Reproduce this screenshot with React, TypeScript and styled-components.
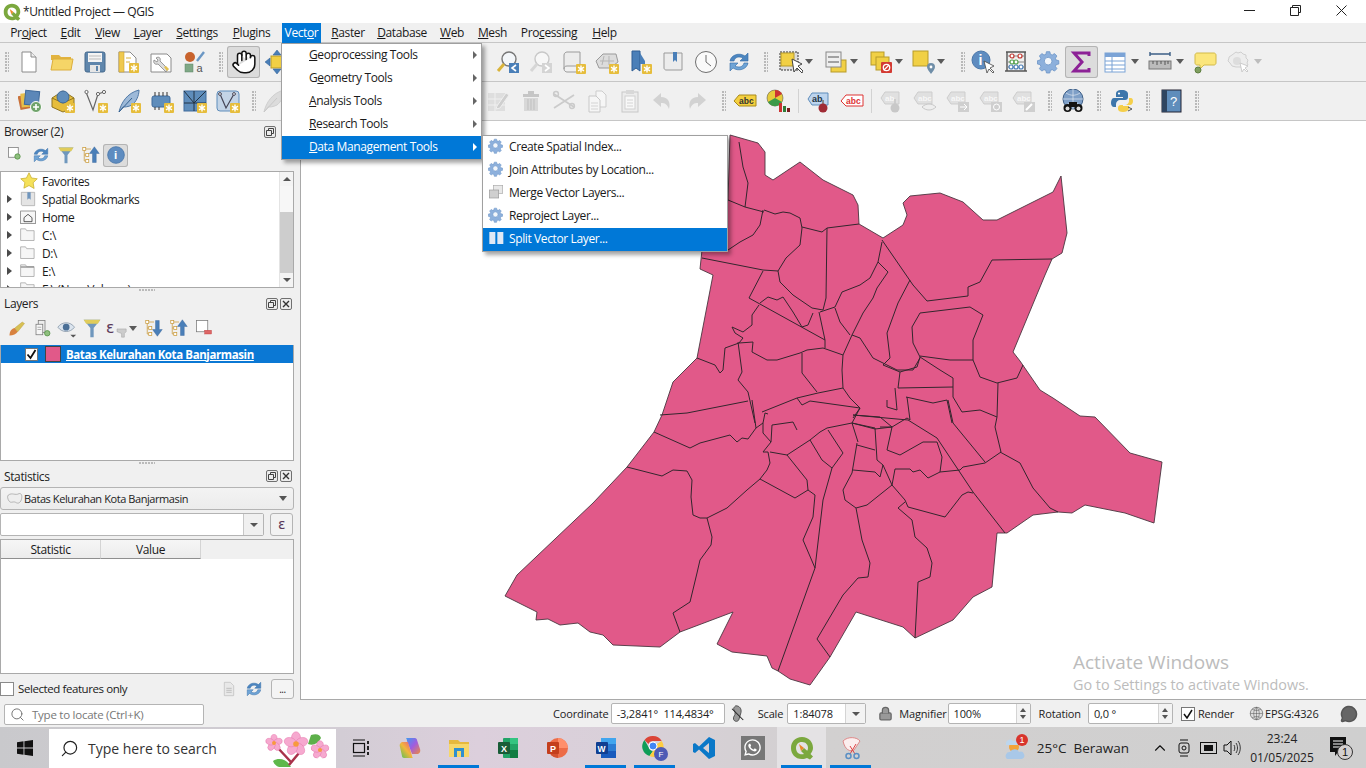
import React from 'react';
import styled, { createGlobalStyle } from 'styled-components';
import { Hand, Search, ChevronUp, Lock, MessageCircle } from 'lucide-react';
import { FaWhatsapp } from 'react-icons/fa';

const UI = '"Open Sans", "Noto Sans", "Liberation Sans", sans-serif';

const Global = createGlobalStyle`
  html, body { margin: 0; padding: 0; width: 1366px; height: 768px; overflow: hidden; }
  body { font-family: ${UI}; font-size: 12px; letter-spacing: -0.38px; color: #1a1a1a; background: #f0f0f0; }
  #root { width: 1366px; height: 768px; }
  * { box-sizing: border-box; }
`;

const Page = styled.div`
  position: relative;
  width: 1366px;
  height: 768px;
  display: flex;
  flex-direction: column;
  overflow: hidden;
`;

/* ---------- title bar ---------- */
const TitleBar = styled.div`
  height: 23px;
  background: #fff;
  display: flex;
  align-items: center;
  padding-left: 3px;
`;
const TitleText = styled.span`
  margin-left: 2px;
  font-size: 12px;
  color: #222;
`;
const WinButtons = styled.div`
  margin-left: auto;
  display: flex;
  height: 100%;
  margin-right: 2px;
`;
const WinButton = styled.div`
  width: 46px;
  display: flex;
  align-items: center;
  justify-content: center;
  margin-top: -2px;
`;

/* ---------- menu bar ---------- */
const MenuBar = styled.div`
  height: 20px;
  background: #f0f0f0;
  border-bottom: 1px solid #c6c6c6;
  display: flex;
  padding-left: 3px;
  font-size: 12px;
`;
const MenuItem = styled.div<{ $active?: boolean; $w: number }>`
  width: ${p => p.$w}px;
  margin-left: ${p => (p.$active ? '5px' : '0')};
  text-align: center;
  line-height: 19px;
  height: ${p => (p.$active ? '20px' : '19px')};
  background: ${p => (p.$active ? '#0078d7' : 'transparent')};
  color: ${p => (p.$active ? '#fff' : '#1a1a1a')};
  white-space: nowrap;
`;

/* ---------- toolbars ---------- */
const ToolBar = styled.div`
  height: 39px;
  background: #f0f0f0;
  border-bottom: 1px solid #c6c6c6;
  display: flex;
  align-items: center;
  padding-bottom: 1px;
`;
const Handle = styled.div<{ $w: number; $x?: number }>`
  width: ${p => p.$w}px;
  height: 22px;
  flex: none;
  position: relative;
  &::after {
    content: '';
    display: block;
    width: 4px;
    height: 20px;
    margin: 1px 0 0 ${p => p.$x ?? 5}px;
    background-image: radial-gradient(circle at 1px 1px, #b9b9b9 0.8px, transparent 1px);
    background-size: 3px 3px;
  }
`;
const ToolBtn = styled.div<{ $active?: boolean; $w?: number }>`
  width: ${p => p.$w ?? 33}px;
  height: 32px;
  flex: none;
  display: flex;
  align-items: center;
  justify-content: center;
  border-radius: 3px;
  background: ${p => (p.$active ? '#dcdcdc' : 'transparent')};
  box-shadow: ${p => (p.$active ? 'inset 0 0 0 1px #b4b4b4' : 'none')};
`;
const ToolGap = styled.div<{ $w: number }>`
  width: ${p => p.$w}px;
  flex: none;
`;
const ToolSep = styled.div<{ $w: number }>`
  width: ${p => p.$w}px;
  height: 24px;
  flex: none;
  display: flex;
  justify-content: center;
  &::after {
    content: '';
    width: 1px;
    background: #d2d2d2;
  }
`;
const DropArea = styled.div<{ $w: number; $dim?: boolean }>`
  width: ${p => p.$w}px;
  flex: none;
  &::after {
    content: '';
    display: block;
    width: 0;
    height: 0;
    border-left: 4.5px solid transparent;
    border-right: 4.5px solid transparent;
    border-top: 5px solid ${p => (p.$dim ? '#bdbdbd' : '#5a5a5a')};
  }
`;

/* ---------- main area ---------- */
const Main = styled.div`
  height: 579px;
  display: flex;
`;
const LeftDock = styled.div`
  width: 300px;
  flex: none;
  display: flex;
  flex-direction: column;
  padding-right: 6px;
`;
const DockHeader = styled.div<{ $h: number; $up?: boolean }>`
  height: ${p => p.$h}px;
  flex: none;
  display: flex;
  align-items: center;
  padding: 0 2px ${p => (p.$up ? '2px' : '0')} 4px;
`;
const DockTitle = styled.span`
  font-size: 12px;
  color: #222;
`;
const DockActions = styled.div`
  margin-left: auto;
  display: flex;
  gap: 2px;
`;
const DockBtn = styled.div`
  width: 12px;
  height: 12px;
  border: 1px solid #707070;
  border-radius: 2px;
  background: #ececec;
  display: flex;
  align-items: center;
  justify-content: center;
`;
const SmallBar = styled.div<{ $h: number }>`
  height: ${p => p.$h}px;
  flex: none;
  display: flex;
  align-items: center;
  padding-bottom: 3px;
`;
const SmallBtn = styled.div<{ $w?: number; $active?: boolean }>`
  width: ${p => p.$w ?? 25}px;
  height: 23px;
  flex: none;
  display: flex;
  align-items: center;
  justify-content: center;
  border-radius: 3px;
  background: ${p => (p.$active ? '#dcdcdc' : 'transparent')};
  box-shadow: ${p => (p.$active ? 'inset 0 0 0 1px #b4b4b4' : 'none')};
`;
const Tree = styled.div`
  height: 117px;
  flex: none;
  background: #fff;
  border: 1px solid #a9a9a9;
  border-right-color: #a9a9a9;
  display: flex;
  overflow: hidden;
`;
const TreeRows = styled.div`
  flex: 1;
  overflow: hidden;
`;
const TreeRow = styled.div`
  height: 18px;
  flex: none;
  display: flex;
  align-items: center;
  font-size: 12px;
  color: #1a1a1a;
`;
const TreeArrow = styled.div<{ $show: boolean }>`
  width: 19px;
  padding-left: 6px;
  flex: none;
  &::after {
    content: '';
    display: ${p => (p.$show ? 'block' : 'none')};
    width: 0;
    height: 0;
    border-top: 4px solid transparent;
    border-bottom: 4px solid transparent;
    border-left: 5px solid #4a4a4a;
  }
`;
const TreeIcon = styled.div`
  width: 22px;
  flex: none;
  display: flex;
  justify-content: flex-start;
`;
const ScrollBar = styled.div`
  width: 14px;
  flex: none;
  background: #f0f0f0;
  display: flex;
  flex-direction: column;
  border-left: 1px solid #e4e4e4;
`;
const ScrollEnd = styled.div<{ $down?: boolean }>`
  height: 14px;
  flex: none;
  background: #f4f4f4;
  display: flex;
  align-items: center;
  justify-content: center;
  &::after {
    content: '';
    width: 0;
    height: 0;
    border-left: 4px solid transparent;
    border-right: 4px solid transparent;
    ${p => (p.$down ? 'border-top: 4px solid #555;' : 'border-bottom: 4px solid #555;')}
  }
`;
const ScrollTrack = styled.div`
  height: 26px;
  flex: none;
  background: #f7f7f7;
`;
const ScrollThumb = styled.div`
  flex: 1;
  background: #cdcdcd;
`;
const Splitter = styled.div<{ $h: number }>`
  height: ${p => p.$h}px;
  flex: none;
  display: flex;
  justify-content: center;
  &::after {
    content: '';
    width: 16px;
    height: 2px;
    margin-top: 1px;
    background-image: radial-gradient(circle at 1px 1px, #b9b9b9 0.7px, transparent 1px);
    background-size: 3px 2px;
  }
`;
const LayerList = styled.div`
  height: 116px;
  flex: none;
  background: #fff;
  border: 1px solid #a9a9a9;
  border-top: none;
`;
const LayerRow = styled.div`
  height: 18px;
  background: #0b78d4;
  display: flex;
  align-items: center;
  padding-left: 24px;
`;
const LayerCheck = styled.div`
  width: 13px;
  height: 13px;
  background: #fff;
  border: 1px solid #777;
  display: flex;
  align-items: center;
  justify-content: center;
`;
const LayerSwatch = styled.div`
  width: 16px;
  height: 16px;
  margin-left: 7px;
  background: #e15989;
  border: 1px solid #444;
`;
const LayerName = styled.span`
  margin-left: 5px;
  font-size: 11.5px;
  font-weight: 700;
  color: #fff;
  text-decoration: underline;
  letter-spacing: -0.4px;
`;
const Combo = styled.div`
  height: 23px;
  flex: none;
  background: linear-gradient(#f3f3f3, #ececec);
  border: 1px solid #b4b4b4;
  border-radius: 3px;
  display: flex;
  align-items: center;
  padding-left: 6px;
  font-size: 11px;
  letter-spacing: -0.42px;
  color: #222;
`;
const ComboText = styled.span`
  margin-left: 1px;
`;
const ComboArrow = styled.div`
  margin-left: auto;
  margin-right: 6px;
  width: 0;
  height: 0;
  border-left: 4.5px solid transparent;
  border-right: 4.5px solid transparent;
  border-top: 5px solid #555;
`;
const ExprRow = styled.div`
  display: flex;
  height: 23px;
  margin-top: 3px;
  flex: none;
`;
const ExprInput = styled.div`
  width: 264px;
  background: #fff;
  border: 1px solid #b4b4b4;
  border-radius: 2px;
  display: flex;
  justify-content: flex-end;
  align-items: stretch;
`;
const ExprDrop = styled.div`
  width: 20px;
  background: #f0f0f0;
  border-left: 1px solid #c8c8c8;
  display: flex;
  align-items: center;
  justify-content: center;
  &::after {
    content: '';
    width: 0;
    height: 0;
    border-left: 4px solid transparent;
    border-right: 4px solid transparent;
    border-top: 4px solid #555;
  }
`;
const ExprBtn = styled.div`
  width: 23px;
  margin-left: 6px;
  border: 1px solid #b4b4b4;
  border-radius: 3px;
  background: #f2f2f2;
  text-align: center;
  font-family: "DejaVu Sans", sans-serif;
  font-size: 14px;
  line-height: 20px;
  color: #5a3a5a;
`;
const StatTable = styled.div`
  height: 135px;
  margin-top: 3px;
  flex: none;
  background: #fff;
  border: 1px solid #a9a9a9;
`;
const StatHeader = styled.div`
  height: 19px;
  background: #f0f0f0;
  display: flex;
`;
const StatCol = styled.div`
  width: 100px;
  text-align: center;
  line-height: 19px;
  font-size: 12px;
  background: linear-gradient(#f6f6f6, #ececec);
  border-right: 1px solid #d4d4d4;
  border-bottom: 1px solid #8f8f8f;
`;
const StatFoot = styled.div`
  flex: 1;
  display: flex;
  align-items: center;
  padding-top: 3px;
`;
const FootCheck = styled.div`
  width: 14px;
  height: 14px;
  background: #fff;
  border: 1px solid #8a8a8a;
  margin-right: 4px;
`;
const FootLabel = styled.span`
  font-size: 11.5px;
  letter-spacing: -0.42px;
`;
const FootTools = styled.div`
  margin-left: auto;
  display: flex;
  align-items: center;
`;
const MoreBtn = styled.div`
  width: 23px;
  height: 20px;
  margin-left: 5px;
  border: 1px solid #b4b4b4;
  border-radius: 3px;
  background: #f4f4f4;
  font-size: 10px;
  line-height: 19px;
  text-align: center;
`;

/* ---------- map ---------- */
const Canvas = styled.div`
  position: relative;
  flex: 1;
  background: #fff;
  border-left: 1px solid #a9a9a9;
  border-bottom: 1px solid #a9a9a9;
  overflow: hidden;
`;
const MapSvg = styled.svg`
  display: block;
  width: 1065px;
  height: 579px;
`;
const Watermark = styled.div`
  position: absolute;
  left: 772px;
  top: 529px;
  color: #bcbcbc;
  letter-spacing: 0;
  font-family: "Open Sans", sans-serif;
`;
const WatermarkBig = styled.div`
  font-size: 19px;
  line-height: 24px;
`;
const WatermarkSmall = styled.div`
  font-size: 14.4px;
  line-height: 22px;
  white-space: nowrap;
`;

/* ---------- menus over the page ---------- */
const Popup = styled.div<{ $l: number; $t: number; $w: number }>`
  position: absolute;
  left: ${p => p.$l}px;
  top: ${p => p.$t}px;
  width: ${p => p.$w}px;
  background: #fff;
  border: 1px solid #a0a0a0;
  box-shadow: 3px 3px 4px rgba(0, 0, 0, 0.35);
  z-index: 5;
`;
const PopupItem = styled.div<{ $active?: boolean; $indent: number }>`
  position: relative;
  height: 23px;
  display: flex;
  align-items: center;
  padding: 0 0 2px ${p => p.$indent}px;
  font-size: 12px;
  white-space: nowrap;
  background: ${p => (p.$active ? '#0078d7' : 'transparent')};
  color: ${p => (p.$active ? '#fff' : '#1a1a1a')};
`;
const PopupArrow = styled.div<{ $active?: boolean }>`
  position: absolute;
  right: 4px;
  top: 7px;
  width: 0;
  height: 0;
  border-top: 4px solid transparent;
  border-bottom: 4px solid transparent;
  border-left: 4px solid ${p => (p.$active ? '#fff' : '#666')};
`;
const PopupIcon = styled.div`
  width: 17px;
  height: 17px;
  margin-right: 4px;
  flex: none;
  display: flex;
`;

/* ---------- status bar ---------- */
const StatusBar = styled.div`
  height: 27px;
  background: #f0f0f0;
  display: flex;
  align-items: center;
  font-size: 11px;
  letter-spacing: -0.15px;
  color: #222;
`;
const Locator = styled.div`
  width: 200px;
  height: 21px;
  margin-left: 4px;
  margin-top: 2px;
  background: #fff;
  border: 1px solid #b4b4b4;
  border-radius: 2px;
  display: flex;
  align-items: center;
  padding-left: 5px;
  color: #777;
  gap: 7px;
  font-size: 11.5px;
  letter-spacing: -0.25px;
`;
const StatusLabel = styled.span<{ $l: number }>`
  margin-left: ${p => p.$l}px;
  white-space: nowrap;
`;
const StatusField = styled.div<{ $w: number; $l: number }>`
  width: ${p => p.$w}px;
  height: 21px;
  margin-left: ${p => p.$l}px;
  background: #fff;
  border: 1px solid #b4b4b4;
  border-radius: 2px;
  display: flex;
  align-items: center;
  padding-left: 5px;
  white-space: pre;
  flex: none;
`;
const FieldDrop = styled.div`
  margin-left: auto;
  width: 20px;
  height: 100%;
  border-left: 1px solid #d4d4d4;
  background: #f3f3f3;
  display: flex;
  align-items: center;
  justify-content: center;
  &::after {
    content: '';
    width: 0;
    height: 0;
    border-left: 4px solid transparent;
    border-right: 4px solid transparent;
    border-top: 4px solid #555;
  }
`;
const FieldSpin = styled.div`
  margin-left: auto;
  width: 14px;
  height: 100%;
  border-left: 1px solid #d4d4d4;
  background: #f3f3f3;
  display: flex;
  flex-direction: column;
  align-items: center;
  justify-content: center;
  gap: 3px;
  &::before, &::after {
    content: '';
    width: 0;
    height: 0;
    border-left: 3.5px solid transparent;
    border-right: 3.5px solid transparent;
  }
  &::before { border-bottom: 4px solid #555; }
  &::after { border-top: 4px solid #555; }
`;
const StatusIcon = styled.div<{ $l: number }>`
  margin-left: ${p => p.$l}px;
  display: flex;
  flex: none;
`;
const RenderCheck = styled.div`
  width: 14px;
  height: 14px;
  margin-left: 8px;
  margin-right: 3px;
  background: #fff;
  border: 1px solid #777;
  display: flex;
  align-items: center;
  justify-content: center;
  flex: none;
`;

/* ---------- taskbar ---------- */
const TaskBar = styled.div`
  height: 41px;
  letter-spacing: 0;
  background: linear-gradient(90deg, #c9c9cc 0%, #d3cdd5 25%, #dccfdc 35%, #d9d0d9 45%, #d2d0d0 60%, #cfcfcf 100%);
  display: flex;
  align-items: stretch;
`;
const StartBtn = styled.div`
  width: 49px;
  display: flex;
  align-items: center;
  justify-content: center;
  flex: none;
`;
const SearchBox = styled.div`
  width: 287px;
  margin-top: 2px;
  background: #fff;
  display: flex;
  align-items: center;
  padding-left: 11px;
  position: relative;
  flex: none;
`;
const SearchText = styled.span`
  margin-left: 9px;
  font-size: 14px;
  color: #333;
`;
const SearchArt = styled.div`
  position: absolute;
  right: 3px;
  top: 0;
`;
const TaskItem = styled.div<{ $open?: boolean; $current?: boolean }>`
  width: 49px;
  flex: none;
  position: relative;
  display: flex;
  align-items: center;
  justify-content: center;
  background: ${p => (p.$current ? '#e4e2e4' : 'transparent')};
  &::after {
    content: '';
    display: ${p => (p.$open ? 'block' : 'none')};
    position: absolute;
    left: 4px;
    right: 4px;
    bottom: 0;
    height: 3px;
    background: #0078d7;
  }
`;
const WhatsTile = styled.div`
  width: 24px;
  height: 24px;
  background: #777;
  display: flex;
  align-items: center;
  justify-content: center;
`;
const Tray = styled.div`
  margin-left: auto;
  display: flex;
  align-items: center;
  color: #222;
`;
const Weather = styled.div`
  display: flex;
  align-items: center;
  margin-right: 19px;
  font-size: 13.5px;
  gap: 5px;
  white-space: pre;
`;
const TrayIcon = styled.div`
  width: 24px;
  display: flex;
  justify-content: center;
  flex: none;
`;
const Clock = styled.div`
  width: 68px;
  margin-left: 4px;
  font-size: 12px;
  line-height: 19px;
  text-align: center;
`;
const Notify = styled.div`
  width: 50px;
  display: flex;
  justify-content: center;
  flex: none;
`;

/* ---------- icons ---------- */
type IP = { children: React.ReactNode; s?: number };
const I = ({ children, s = 24 }: IP) => (
  <svg width={s} height={s} viewBox="0 0 24 24" style={{ display: 'block' }}>{children}</svg>
);
const Star = ({ x = 14, y = 14 }: { x?: number; y?: number }) => (
  <g transform={`translate(${x} ${y})`}>
    <rect width="10" height="10" rx="1" fill="#e6bd3c" />
    <path d="M5 1.5v7M2 3.2l6 3.6M8 3.2l-6 3.6" stroke="#fff" strokeWidth="1.4" />
  </g>
);
const GlyphText = ({ x, y, t, c, s = 7, w = 700 }: { x: number; y: number; t: string; c: string; s?: number; w?: number }) => (
  <text x={x} y={y} fontSize={s} fontWeight={w} fill={c} letterSpacing="0" fontFamily="Liberation Sans, sans-serif">{t}</text>
);
const Refresh = ({ s = 24 }: { s?: number }) => (
  <I s={s}>
    <path d="M3 11C4 5 12 2 18 6l3-3v8h-8l3-3C12 6 8 7 7 11z" fill="#4d86c0" stroke="#2f6aa5" strokeWidth=".6" />
    <path d="M21 13c-1 6-9 9-15 5l-3 3v-8h8l-3 3c4 2 8 1 9-3z" fill="#6fa4d6" stroke="#2f6aa5" strokeWidth=".6" />
  </I>
);
const GearPath = "M10 1h4l.6 3 2.2.9 2.6-1.7 2.8 2.8-1.7 2.6.9 2.2 3 .6v4l-3 .6-.9 2.2 1.7 2.6-2.8 2.8-2.6-1.7-2.2.9-.6 3h-4l-.6-3-2.2-.9-2.6 1.7-2.8-2.8 1.7-2.6-.9-2.2-3-.6v-4l3-.6.9-2.2-1.7-2.6 2.8-2.8 2.6 1.7 2.2-.9z";
const Gear = ({ s = 24 }: { s?: number }) => (
  <svg width={s} height={s} viewBox="-1 -1 28 28" style={{ display: 'block' }}>
    <path d={GearPath} fill="#8db0dc" stroke="#6f97c8" strokeWidth="1" />
    <circle cx="12" cy="12" r="4.5" fill="#f2f6fb" stroke="#6f97c8" />
  </svg>
);

const NewFile = () => <I><path d="M5 2h9l5 5v15H5z" fill="#fff" stroke="#8a8a8a" /><path d="M14 2v5h5" fill="#eee" stroke="#8a8a8a" /></I>;
const OpenFolder = () => <I><path d="M1 5h8l2 2h10v3H1z" fill="#e2b33f" /><path d="M1 20l2-11h20l-2 11z" fill="#f5d567" stroke="#dcae3c" /></I>;
const Save = () => <I><rect x="2" y="2" width="20" height="20" rx="2" fill="#5f86ac" stroke="#44688c" /><rect x="5" y="3" width="14" height="9" fill="#f4f4f4" /><path d="M6 6h12M6 9h12" stroke="#bbb" /><rect x="7" y="15" width="10" height="7" fill="#e6e6e6" /><rect x="13" y="16" width="2" height="5" fill="#5f86ac" /></I>;
const SaveAs = () => <I><path d="M3 2h11l6 6v14H3z" fill="#fff" stroke="#8a8a8a" /><rect x="3" y="2" width="5" height="20" fill="#efc94f" stroke="#caa033" strokeWidth=".6" /><path d="M10 8h5M10 12h4" stroke="#d6b040" /><Star x={13} y={13} /></I>;
const Props = () => <I><path d="M2 4h16l4 4v14H2z" fill="#fff" stroke="#8a8a8a" /><path d="M7 8c3-2 5 0 4 3l8 8-2 3-8-8c-3 1-5-1-4-4l3 2 1-2z" fill="#ddd" stroke="#777" strokeWidth=".7" /><path d="M15 17l3 4 2-2-3-3z" fill="#e3c14f" /></I>;
const StyleIco = () => <I><circle cx="8" cy="7" r="5" fill="#c8632d" /><rect x="3" y="14" width="8" height="8" fill="#7fa886" stroke="#5e8566" strokeWidth=".5" /><path d="M15 11l7-9" stroke="#6b97c4" strokeWidth="2.4" /><GlyphText x={14.5} y={22} t="a" c="#555" s={11} w={400} /></I>;
const HandIco = () => <Hand size={26} strokeWidth={1.4} color="#111" fill="#fff" />;
const PanTo = () => <I><rect x="6" y="6" width="12" height="12" fill="#f1d045" stroke="#b79b2a" /><path d="M12 0l4 5H8zM12 24l-4-5h8zM0 12l5-4v8zM24 12l-5 4V8z" fill="#4a7fb8" stroke="#2f5f95" strokeWidth=".5" /></I>;
const ZoomLast = () => <I><circle cx="13" cy="9" r="7" fill="#f3f6f9" stroke="#777" strokeWidth="1.4" /><path d="M8 14l-6 7" stroke="#d9b43c" strokeWidth="3" /><rect x="13" y="13" width="10" height="10" fill="#4a7fb8" /><path d="M20 15l-4 3 4 3" fill="none" stroke="#fff" strokeWidth="1.6" /></I>;
const ZoomNext = () => <I><circle cx="13" cy="9" r="7" fill="#f7f7f7" stroke="#c8c8c8" strokeWidth="1.4" /><path d="M8 14l-6 7" stroke="#d6d6d6" strokeWidth="3" /><rect x="13" y="13" width="10" height="10" fill="#d4d4d4" /><path d="M16 15l4 3-4 3" fill="none" stroke="#fff" strokeWidth="1.6" /></I>;
const NewMapView = () => <I><path d="M2 5c0-2 2-3 3-3h13v14H5c-2 0-3 1-3 3z" fill="#ececec" stroke="#9a9a9a" /><path d="M2 19c0 2 2 3 3 3h13" fill="none" stroke="#9a9a9a" /><Star /></I>;
const Map3d = () => <I><path d="M1 11l7-7h13l2 8-8 6H4z" fill="#dcdcdc" stroke="#9a9a9a" /><path d="M5 11h14M9 6l-2 9M14 6v9" stroke="#b5b5b5" /><Star /></I>;
const BookNew = () => <I><path d="M4 1h8v20l-4-3-4 3z" fill="#4a7fb8" stroke="#2f5f95" /><path d="M12 3l5 8v3h-5z" fill="#4a7fb8" /><Star /></I>;
const BookShow = () => <I><path d="M3 3h18v17H5c-1 0-2-1-2-2z" fill="#ececec" stroke="#9a9a9a" /><path d="M12 2h4v10l-2-2-2 2z" fill="#4a7fb8" /></I>;
const ClockIco = () => <I><circle cx="12" cy="12" r="10.5" fill="#fafafa" stroke="#6f6f6f" /><path d="M12 5v7l5 4" fill="none" stroke="#6f6f6f" /></I>;
const SelectIco = () => <I><rect x="1" y="2" width="18" height="18" fill="#ddd" stroke="#333" strokeDasharray="2 1" /><rect x="2" y="3" width="13" height="13" fill="#f1d045" stroke="#b79b2a" /><path d="M13 9l2 13 3-4 5 5 1-2-5-5 4-2z" fill="#fff" stroke="#444" /></I>;
const SelectForm = () => <I><rect x="7" y="10" width="15" height="12" fill="#f1d045" stroke="#b79b2a" /><rect x="2" y="2" width="15" height="15" fill="#eee" stroke="#888" /><path d="M4 7h11M4 12h11" stroke="#888" strokeWidth="1.6" /></I>;
const Deselect = () => <I><rect x="2" y="2" width="13" height="13" fill="#f1d045" stroke="#b79b2a" /><rect x="7" y="7" width="13" height="13" fill="#f1d045" stroke="#b79b2a" /><rect x="12" y="12" width="11" height="11" rx="1" fill="#d33a32" /><circle cx="17.5" cy="17.5" r="3.2" fill="none" stroke="#fff" strokeWidth="1.3" /><path d="M15 20l5-5" stroke="#fff" strokeWidth="1.3" /></I>;
const SelectLoc = () => <I><rect x="1" y="1" width="15" height="15" fill="#f1d045" stroke="#b79b2a" /><path d="M19 24c-2-3-4-5-4-7a4 4 0 118 0c0 2-2 4-4 7z" fill="#6f8ea8" /><circle cx="19" cy="17" r="1.4" fill="#fff" /></I>;
const Identify = () => <I><circle cx="10" cy="10" r="9" fill="#5e8cc0" stroke="#4a77aa" /><GlyphText x={7.5} y={15} t="i" c="#fff" s={14} /><path d="M13 11l3 12 2-4 4 4 1-1-4-4 4-2z" fill="#fff" stroke="#444" strokeWidth=".8" /></I>;
const Abacus = () => <I><path d="M2 2h20M3 2v19M21 2v19M1 21h22" stroke="#555" strokeWidth="1.4" fill="none" /><path d="M3 6h18M3 12h18M3 17h18" stroke="#888" /><g fill="#fff" strokeWidth="1.2"><circle cx="8" cy="6" r="2" stroke="#c23b33" /><circle cx="16" cy="6" r="2" stroke="#c23b33" /><circle cx="8" cy="12" r="2" stroke="#57a34f" /><circle cx="12" cy="12" r="2" stroke="#57a34f" /><circle cx="7" cy="17" r="2" stroke="#4a7fb8" /><circle cx="12" cy="17" r="2" stroke="#4a7fb8" /><circle cx="17" cy="17" r="2" stroke="#4a7fb8" /></g></I>;
const Sigma = () => <I><path d="M19 6V3H4l8 9-8 9h15v-3" fill="none" stroke="#8c2196" strokeWidth="3" /></I>;
const TableIco = () => <I><rect x="2" y="3" width="20" height="19" fill="#fff" stroke="#7ba3d6" /><rect x="2" y="3" width="20" height="4" fill="#7ba3d6" /><path d="M2 11h20M2 15h20M2 19h20M9 7v15" stroke="#7ba3d6" /></I>;
const Ruler = () => <I><path d="M2 4h20M2 2v4M22 2v4" stroke="#3b5e85" strokeWidth="1.4" /><rect x="1" y="11" width="22" height="8" fill="#bcbcbc" stroke="#777" /><path d="M5 11v3M9 11v4M13 11v3M17 11v4M20 11v3" stroke="#555" /></I>;
const Balloon = () => <I><path d="M4 3h17c1 0 2 1 2 2v8c0 1-1 2-2 2H11l-4 4v-4H4c-1 0-2-1-2-2V5c0-1 1-2 2-2z" fill="#fbe67c" stroke="#d2ba49" /><circle cx="5" cy="20" r="3" fill="#7f9f5f" stroke="#5f7f40" /></I>;
const DisabledRun = () => <I><path d="M10 2l2 1 3-1 2 2 3 1v3l2 2-1 3 1 2-2 2H10l-4-1-2-3-2-2 1-3V7l3-2z" fill="#ededed" stroke="#cfcfcf" /><circle cx="11" cy="11" r="4" fill="#ddd" /><path d="M14 13l2 9 2-3 3 3 1-1-3-3 3-2z" fill="#fff" stroke="#ccc" /></I>;
const DataSource = () => <I><rect x="1" y="6" width="13" height="14" fill="#c9713a" transform="rotate(-12 7 13)" /><rect x="3" y="4" width="13" height="14" fill="#e7bf4b" transform="rotate(-6 9 11)" /><rect x="7" y="2" width="14" height="14" fill="#5c87b8" stroke="#3f6a9b" transform="rotate(6 14 9)" /><circle cx="18" cy="18" r="5.5" fill="#6fa36a" stroke="#fff" /><path d="M18 15v6M15 18h6" stroke="#fff" strokeWidth="1.6" /></I>;
const GeoPkg = () => <I><path d="M1 9l11-7 11 7v9l-11 5-11-5z" fill="#e6bd3c" stroke="#8e7420" /><path d="M1 9l11 5 11-5" fill="none" stroke="#8e7420" /><circle cx="12" cy="8" r="6" fill="#5f8dbb" stroke="#3f6a9b" /><Star /></I>;
const NewShape = () => <I><path d="M2 3l7 18 5-16 6-2" fill="none" stroke="#666" strokeWidth="1.2" /><circle cx="2.5" cy="3" r="1.6" fill="#fff" stroke="#666" /><circle cx="14" cy="5" r="1.6" fill="#fff" stroke="#666" /><circle cx="20" cy="3" r="1.6" fill="#fff" stroke="#666" /><Star /></I>;
const Feather = ({ dim }: { dim?: boolean }) => <I><path d="M2 23C4 14 10 4 22 1c0 6-3 12-7 15-4 2-7 2-9 2z" fill={dim ? '#dcdcdc' : '#9db9d8'} stroke={dim ? '#cfcfcf' : '#4f78a6'} /><path d="M2 23L15 9" stroke={dim ? '#c8c8c8' : '#35618f'} />{!dim && <Star />}</I>;
const Scratch = () => <I><rect x="2" y="7" width="18" height="11" rx="2" fill="#5f8dbb" stroke="#3f6a9b" /><path d="M5 3v4M9 3v4M13 3v4M17 3v4M5 18v3M9 18v3" stroke="#333" /><Star /></I>;
const Virtual = () => <I><rect x="1" y="2" width="22" height="20" fill="#5f8dbb" stroke="#3f6a9b" /><path d="M1 14h22M11 2v20M1 2l10 12M11 14L23 2" stroke="#234" /><Star /></I>;
const MeshIco = () => <I><rect x="1" y="2" width="22" height="20" rx="3" fill="#c3d4e6" stroke="#5f8dbb" /><path d="M4 5l6 14 8-14" fill="none" stroke="#445" strokeWidth="1.2" /><circle cx="4" cy="5" r="1.4" fill="#fff" stroke="#445" /><circle cx="18" cy="5" r="1.4" fill="#fff" stroke="#445" /><Star /></I>;
const EditTable = () => <I><rect x="2" y="4" width="17" height="18" fill="#dedede" /><path d="M2 10h17M2 16h17M9 4v18" stroke="#f0f0f0" /><path d="M11 17l9-13 3 2-9 13-4 1z" fill="#cfcfcf" stroke="#efefef" /></I>;
const Trash = () => <I><rect x="4" y="5" width="16" height="3" fill="#c6c6c6" /><rect x="9" y="2" width="6" height="3" fill="#c6c6c6" /><path d="M5 9h14v13H5z" fill="#d8d8d8" /><path d="M9 10v11M12 10v11M15 10v11" stroke="#bfbfbf" /></I>;
const Scissors = () => <I><path d="M2 5l20 13M2 19L22 6" stroke="#cbcbcb" strokeWidth="1.8" /><circle cx="4" cy="5" r="2.4" fill="none" stroke="#cbcbcb" strokeWidth="1.5" /><circle cx="20" cy="17" r="2.4" fill="none" stroke="#cbcbcb" strokeWidth="1.5" /></I>;
const Copy = () => <I><path d="M11 2h6l4 4v12H11z" fill="#f6f6f6" stroke="#cdcdcd" /><path d="M4 7h7l4 4v12H4z" fill="#f6f6f6" stroke="#c8c8c8" /><path d="M6 14h7M6 17h7M6 20h7" stroke="#d4d4d4" /></I>;
const Paste = () => <I><rect x="4" y="3" width="16" height="20" fill="#ececec" stroke="#c8c8c8" /><rect x="8" y="1" width="8" height="4" fill="#d8d8d8" /><rect x="7" y="7" width="10" height="13" fill="#f8f8f8" stroke="#d0d0d0" /><path d="M9 11h6M9 14h6M9 17h6" stroke="#d4d4d4" /></I>;
const Undo = () => <I><path d="M10 4L2 11l8 7v-4c4 0 6 1 8 6 2-7-1-12-8-12z" fill="#d2d2d2" /></I>;
const Redo = () => <I><path d="M14 4l8 7-8 7v-4c-4 0-6 1-8 6-2-7 1-12 8-12z" fill="#d2d2d2" /></I>;
const LabelTag = ({ t, fill, line, c, x = 6 }: { t: string; fill: string; line: string; c: string; x?: number }) => (
  <I><path d="M1 12l5-6h17v11H6z" fill={fill} stroke={line} /><GlyphText x={x} y={15} t={t} c={c} s={8.5} /></I>
);
const DiagramIco = () => <I><circle cx="9" cy="9" r="8" fill="#e6cc3c" stroke="#444" strokeWidth=".5" /><path d="M9 9V1a8 8 0 017 4z" fill="#c33" /><path d="M9 9l-7 4a8 8 0 0014 0z" fill="#3c9a4a" /><rect x="13" y="14" width="3" height="9" fill="#c33" /><rect x="17" y="17" width="3" height="6" fill="#2f7d3a" /><rect x="21" y="19" width="3" height="4" fill="#7a1f1f" /></I>;
const LabelPin = () => <I><path d="M1 10l4-6h16v12H5z" fill="#bcd4ee" stroke="#5f8dbb" /><GlyphText x={5} y={13} t="ab" c="#234" s={9} /><path d="M16 11v7" stroke="#888" strokeWidth="2" /><circle cx="16" cy="19" r="4.5" fill="#a02b35" /></I>;
const GrayTag = ({ t, badge }: { t: string; badge: React.ReactNode }) => (
  <I><path d="M1 9l4-6h14v12H5z" fill="#e0e0e0" stroke="#cdcdcd" /><GlyphText x={5} y={12} t={t} c="#f7f7f7" s={8} />{badge}</I>
);
const MetaSearch = () => <I><circle cx="12" cy="10" r="10" fill="#7e9fc7" stroke="#3e5f87" /><path d="M2 10h20M12 0v20M5 4c5 3 9 3 14 0M5 16c5-3 9-3 14 0" stroke="#dfe8f2" strokeWidth=".7" fill="none" /><circle cx="6.5" cy="19" r="4" fill="#111" /><circle cx="17.5" cy="19" r="4" fill="#111" /><rect x="8" y="13" width="8" height="5" fill="#111" /><circle cx="6.5" cy="19.5" r="2" fill="#ddd" /><circle cx="17.5" cy="19.5" r="2" fill="#ddd" /></I>;
const Python = ({ s = 24 }: { s?: number }) => <I s={s}><path d="M12 1c-5 0-6 2-6 4v3h7v1H4c-2 0-3 2-3 5 0 2 1 4 3 4h2v-3c0-2 2-4 4-4h5c2 0 3-1 3-3V5c0-2-2-4-6-4z" fill="#3d76ab" /><circle cx="9" cy="4.5" r="1.1" fill="#fff" /><path d="M19 9v3c0 2-2 4-4 4h-4c-2 0-3 1-3 3v1c0 2 2 3 5 3s5-1 6-3v-3h-6v-1h7c2 0 3-2 3-4s-1-3-2-3z" fill="#f5cf4a" /><path d="M18 18l4 2-4 2" fill="none" stroke="#555" /></I>;
const HelpBook = () => <I><rect x="3" y="1" width="19" height="22" fill="#5f8dbb" stroke="#223" /><rect x="3" y="1" width="5" height="22" fill="#2f4560" /><GlyphText x={11} y={17} t="?" c="#fff" s={13} w={400} /></I>;

/* small panel icons */
const AddGroup = () => <I s={18}><rect x="2" y="2" width="13" height="13" fill="#fff" stroke="#777" /><circle cx="14" cy="14" r="3.6" fill="#8fbf7f" stroke="#4f8f3f" /></I>;
const Funnel = ({ s = 20 }: { s?: number }) => <I s={s}><path d="M2 2h20l-8 10v11h-4V12z" fill="#6f97bd" /><path d="M2 2h20l-3 5H5z" fill="#e0cc5a" /></I>;
const CollapseAll = ({ down }: { down?: boolean }) => <I s={18}><path d="M3 4h9M3 12h4M3 20h4M3 4v16" stroke="#c99a3a" fill="none" /><rect x="1" y="2" width="4" height="4" fill="#fff" stroke="#c99a3a" /><rect x="5" y="10" width="4" height="4" fill="#fff" stroke="#c99a3a" /><rect x="5" y="18" width="4" height="4" fill="#fff" stroke="#c99a3a" /><path d={down ? 'M14 2h5v12h4l-6.500 9L10 14h4z' : 'M14 22h5V10h4L16.500 1 10 10h4z'} fill="#4a7fb8" stroke="#2f5f95" strokeWidth=".5" /></I>;
const InfoSmall = () => <I s={20}><circle cx="12" cy="12" r="10" fill="#5e8cc0" stroke="#4a77aa" /><GlyphText x={9.5} y={17} t="i" c="#fff" s={14} /></I>;
const Folder = ({ open }: { open?: boolean }) => <I s={16}><path d="M1 3h8l2 3h12v16H1z" fill="#f6f6f6" stroke="#8e8e8e" transform="scale(.92)" />{open && <path d="M1 6h20" stroke="#8e8e8e" strokeWidth="2" />}</I>;
const HomeFolder = () => <I s={16}><rect x="1" y="3" width="22" height="19" fill="#f6f6f6" stroke="#6a6a6a" /><path d="M6 13l6-5 6 5v6H6z" fill="none" stroke="#444" strokeWidth="1.3" /></I>;
const BookTree = () => <I s={16}><path d="M2 2h20v20H4c-1 0-2-1-2-2z" fill="#e4e4e4" stroke="#a2a2a2" /><path d="M11 2h5v11l-2.5-2-2.5 2z" fill="#6f95bd" /></I>;
const StarIco = () => <I s={18}><path d="M12 1l3.4 7 7.6 1-5.5 5.4 1.3 7.6L12 18l-6.800 3.600 1.300-7.600L1 9l7.600-1z" fill="#f5e15a" stroke="#c7ad2f" /></I>;
const Brush = () => <I s={18}><path d="M2 22c0-6 3-9 7-10l4 5c-2 3-6 5-11 5z" fill="#d8823f" /><path d="M9 12l4 5 9-11-3-2z" fill="#d8c053" stroke="#ab9030" strokeWidth=".5" /></I>;
const AddLayers = () => <I s={18}><rect x="7" y="2" width="9" height="16" fill="#ececec" stroke="#777" /><rect x="4" y="7" width="9" height="14" fill="#f6f6f6" stroke="#777" /><path d="M6 11h5M6 14h5" stroke="#999" /><circle cx="19" cy="19" r="3.600" fill="#8fbf7f" stroke="#4f8f3f" /></I>;
const Eye = () => <I s={20}><path d="M1 11c5-7 15-7 20 0-5 7-15 7-20 0z" fill="#dbe4ee" stroke="#8a9aaa" /><circle cx="11" cy="11" r="4" fill="#4a6f96" /><path d="M16 20h7l-3.500 3.500z" fill="#555" /></I>;
const EpsFilter = () => <I s={22}><text x="0" y="17" fontSize="17" fill="#5a3a5a" letterSpacing="0" fontFamily="DejaVu Sans, sans-serif">ε</text><path d="M12 13h10v3l-2 2v4h-3v-4l-5-2z" fill="#ccc" stroke="#999" strokeWidth=".5" /></I>;
const RemoveLayer = () => <I s={18}><rect x="2" y="2" width="15" height="15" fill="#fff" stroke="#777" /><rect x="13" y="15" width="9" height="5" fill="#d66" stroke="#b33" strokeWidth=".5" /></I>;
const Combi = () => <I s={16}><path d="M2 6c6-4 10 1 16-2 3-1 5 2 4 7-1 6-5 9-9 6-4-2-7 2-10-2-2-3-3-7-1-9z" fill="#eee" stroke="#999" /></I>;
const GrayCopy = () => <I s={16}><path d="M5 2h9l5 5v15H5z" fill="#e8e8e8" stroke="#bbb" /><path d="M8 11h8M8 14h8M8 17h8" stroke="#aaa" /></I>;
const Cog16 = () => <Gear s={16} />;
const MergeIco = () => <I s={16}><rect x="8" y="2" width="14" height="12" fill="#e8e8e8" stroke="#aaa" /><rect x="2" y="9" width="14" height="12" fill="#cfcfcf" stroke="#999" /></I>;
const SplitIco = () => <I s={16}><rect x="2" y="3" width="9" height="18" fill="#dfe9f5" /><rect x="14" y="3" width="9" height="18" fill="#dfe9f5" /></I>;
const QLogo = ({ s = 18 }: { s?: number }) => (
  <svg width={s} height={s} viewBox="0 0 24 24" style={{ display: 'block' }}>
    <path d="M12 1C5 1 1 6 1 12s4 11 11 11c2 0 4-.5 5-1l3 1.500 3-3-2.500-2.500c1.500-2 2.500-4 2.500-6C23 6 19 1 12 1zm0 5c4 0 6 3 6 6 0 1-.3 2-.8 2.800L14 12l-3 3 3 3c-.6.200-1.300.300-2 .300-4 0-6-3-6-6.300S8 6 12 6z" fill="#7ba83e" />
    <path d="M9 8l5 4-3 3z" fill="#e88a2a" />
  </svg>
);
const EpsgGlobe = () => <I s={15}><circle cx="12" cy="12" r="10" fill="#ddd" stroke="#555" /><path d="M2 12h20M12 2v20M5 5c5 3 9 3 14 0M5 19c5-3 9-3 14 0M12 2c-6 5-6 15 0 20M12 2c6 5 6 15 0 20" stroke="#555" fill="none" strokeWidth=".8" /></I>;
const NoCrs = () => <I s={18}><path d="M9 1c5 0 8 4 7 9l-3 10c-2 3-6 2-7-1-1-4 3-5 2-9S4 5 9 1z" fill="#999" stroke="#333" /><path d="M4 5l15 15" stroke="#222" strokeWidth="1.4" /></I>;

const WinLogo = () => <svg width="16" height="16" viewBox="0 0 16 16"><path d="M0 2.300L6.500 1.300V7.600H0zM7.400 1.200L16 0V7.600H7.400zM0 8.400H6.500V14.700L0 13.700zM7.400 8.400H16V16L7.400 14.800z" fill="#111" /></svg>;
const Flowers = () => (
  <svg width="74" height="38" viewBox="0 0 74 38" style={{ display: 'block' }}>
    <path d="M52 6c6-2 9 0 10 3-3 6-8 8-13 6z" fill="#5db04a" />
    <path d="M14 32c6-4 14-2 18 6H20c-3-1-5-3-6-6z" fill="#5fb84a" />
    <path d="M18 18l14 15M40 24L30 36" stroke="#a8324a" strokeWidth="2.500" />
    {[[15, 14, 7], [37, 15, 10], [61, 21, 7.500]].map(([x, y, r], i) => (
      <g key={i} transform={`translate(${x} ${y})`}>
        {[0, 72, 144, 216, 288].map(a => (
          <ellipse key={a} cx="0" cy={-r * 0.6} rx={r * 0.45} ry={r * 0.62} fill="#f6a9cf" stroke="#e679ad" strokeWidth=".5" transform={`rotate(${a})`} />
        ))}
        <circle r={r * 0.28} fill="#f79a3e" />
      </g>
    ))}
  </svg>
);
const TaskView = () => <svg width="20" height="18" viewBox="0 0 20 18"><path d="M2 1h12M2 17h12" stroke="#111" strokeWidth="1.200" /><rect x="2.500" y="4.500" width="11" height="9" fill="none" stroke="#111" strokeWidth="1.200" /><path d="M17 2v3M17 7v4M17 13v3" stroke="#111" strokeWidth="1.800" /></svg>;
const Copilot = () => (
  <svg width="24" height="24" viewBox="0 0 24 24">
    <defs>
      <linearGradient id="cp" x1="0" y1="0" x2="1" y2="1"><stop offset="0" stopColor="#3e9bf0" /><stop offset=".5" stopColor="#a05ce0" /><stop offset="1" stopColor="#f08a3c" /></linearGradient>
      <linearGradient id="cp2" x1="0" y1="1" x2="1" y2="0"><stop offset="0" stopColor="#4ec25a" /><stop offset=".5" stopColor="#f2b63c" /><stop offset="1" stopColor="#e84f8a" /></linearGradient>
    </defs>
    <path d="M8 2h9c1 0 2 1 2 2l3 9c1 3-1 5-3 5h-5L9 5C9 3 8 2 8 2z" fill="url(#cp)" />
    <path d="M2 11c-1-3 1-5 3-5h5l4 14c0 1 1 2 1 2H6c-1 0-2-1-2-2z" fill="url(#cp2)" />
  </svg>
);
const Explorer = () => <I><path d="M2 4h9l2 2h9v4H2z" fill="#e6b93e" /><rect x="2" y="8" width="20" height="13" fill="#f6d76a" /><rect x="7" y="12" width="10" height="9" fill="#2f8fd0" /><rect x="10" y="15" width="4" height="6" fill="#f6d76a" /></I>;
const Excel = () => <I><rect x="7" y="2" width="15" height="20" rx="1" fill="#21a366" /><rect x="14" y="2" width="8" height="6" fill="#33c481" /><rect x="14" y="14" width="8" height="8" fill="#107c41" /><rect x="2" y="6" width="12" height="12" rx="1" fill="#185c37" /><GlyphText x={5} y={15.500} t="X" c="#fff" s={9} /></I>;
const Ppt = () => <I><circle cx="13" cy="12" r="10" fill="#ed6c47" /><path d="M13 2a10 10 0 0110 10H13z" fill="#ff8f6b" /><path d="M13 22a10 10 0 01-7-3V12h7z" fill="#d35230" /><rect x="2" y="6" width="12" height="12" rx="1" fill="#c43e1c" /><GlyphText x={5} y={15.500} t="P" c="#fff" s={9} /></I>;
const Word = () => <I><rect x="7" y="2" width="15" height="20" rx="1" fill="#2b7cd3" /><rect x="7" y="2" width="15" height="6" fill="#41a5ee" /><rect x="7" y="15" width="15" height="7" fill="#185abd" /><rect x="2" y="6" width="12" height="12" rx="1" fill="#103f91" /><GlyphText x={3.500} y={15.500} t="W" c="#fff" s={8.500} /></I>;
const Chrome = () => (
  <svg width="28" height="28" viewBox="0 0 28 28">
    <path d="M12 2a10 10 0 018.700 5H12a5 5 0 00-4.600 3L3.500 6A10 10 0 0112 2z" fill="#db4437" />
    <path d="M3.500 6l4 7a5 5 0 004.500 4l-3.500 5A10 10 0 013.500 6z" fill="#0f9d58" />
    <path d="M20.700 7a10 10 0 01-12.200 15l3.500-5a5 5 0 004-7z" fill="#ffcd40" />
    <circle cx="12" cy="12" r="4" fill="#4285f4" stroke="#fff" />
    <circle cx="20" cy="20" r="7" fill="#4f5bb5" />
    <text x="20" y="23" fontSize="8" textAnchor="middle" fill="#fff" fontFamily="Liberation Sans, sans-serif">F</text>
  </svg>
);
const VsCode = () => <I><path d="M17 1l6 3v16l-6 3-10-9.500L3 17l-2-1V8l2-1 4 3.500zM17 7l-6 5 6 5z" fill="#0a78c8" /></I>;
const Snip = () => <I><path d="M4 5c5-5 14-4 17 0l-6 9c-4 2-9 0-11-9z" fill="#fbeeee" stroke="#d88" /><path d="M11 10l5 8M17 8l-6 10" stroke="#d44" /><circle cx="9.500" cy="20" r="2.500" fill="none" stroke="#5a8fc4" strokeWidth="1.500" /><circle cx="17.500" cy="20" r="2.500" fill="none" stroke="#5a8fc4" strokeWidth="1.500" /></I>;
const WeatherIco = () => (
  <svg width="28" height="30" viewBox="0 0 28 30">
    <circle cx="10" cy="14" r="5" fill="#f2a33a" />
    <path d="M2 11a4 4 0 017-3h5v4H2z" fill="#bcd6ee" />
    <path d="M3 26a4 4 0 013-7 5 5 0 019 0 3.500 3.500 0 013 7z" fill="#a9c8e8" />
    <circle cx="18" cy="7" r="6" fill="#d8342c" />
    <text x="18" y="10" fontSize="9" textAnchor="middle" fill="#fff" fontFamily="Liberation Sans, sans-serif">1</text>
  </svg>
);
const Meet = () => <svg width="14" height="18" viewBox="0 0 14 18"><path d="M3 1h8M3 17h8" stroke="#111" /><rect x="2" y="4" width="10" height="10" rx="2" fill="none" stroke="#111" /><circle cx="7" cy="9" r="2" fill="none" stroke="#111" /></svg>;
const Battery = () => <svg width="17" height="12" viewBox="0 0 17 12"><rect x=".5" y=".5" width="16" height="11" fill="none" stroke="#111" /><rect x="4" y="3" width="9" height="6" fill="#111" /></svg>;
const Volume = () => <svg width="18" height="16" viewBox="0 0 18 16"><path d="M1 5h3l4-4v14l-4-4H1z" fill="none" stroke="#111" /><path d="M11 5c1 2 1 4 0 6M13 3c2 3 2 7 0 10M15 1c3 4 3 10 0 14" fill="none" stroke="#111" strokeWidth=".8" /></svg>;
const NotifyIco = () => (
  <svg width="28" height="28" viewBox="0 0 28 28">
    <path d="M3 3h16v15h-8l-3 4v-4H3z" fill="#111" />
    <path d="M6 7h10M6 10h10M6 13h10" stroke="#fff" />
    <circle cx="18" cy="18" r="7.500" fill="#d4d0d0" stroke="#333" />
    <text x="18" y="22" fontSize="11" textAnchor="middle" fill="#111" fontFamily="Liberation Sans, sans-serif">1</text>
  </svg>
);

/* ---------- map data, in page pixels ---------- */
const OUTLINE = '730,135 758,143 765,152 765,175 773,180 800,162 823,180 853,195 858,205 859,224 883,238 903,225 907,215 903,203 910,196 940,193 963,202 983,220 997,220 1053,192 1061,176 1067,233 1062,253 1052,259 1045,275 1013,352 1020,361 1040,390 1053,398 1080,416 1095,417 1130,453 1162,462 1154,523 1125,513 1085,505 1072,513 1058,512 1033,515 1007,533 997,533 992,587 973,597 953,620 915,638 903,627 856,612 830,657 810,685 790,679 778,671 772,668 767,656 732,652 717,644 733,612 680,632 660,647 613,645 603,635 590,632 578,623 560,625 548,619 536,620 537,612 505,596 517,575 593,503 627,467 654,432 662,415 673,382 697,358 713,275 700,269 702,250 705,220 728,200';
const LINES = [
  '702,258 763,270 778,271 786,258 800,245 802,228 800,218 790,213 783,212 775,214 764,210',
  '763,210 760,225 753,235 740,242 728,250',
  '728,200 745,207 764,212',
  '739,142 743,167 748,183 745,207',
  '802,227 822,232 827,228 859,224',
  '827,228 826,298 823,310 812,308 793,295 780,282 778,271',
  '763,271 749,298 825,340 819,312',
  '760,303 768,297 777,300 783,297 793,312 802,327 808,325 813,313',
  '759,305 752,315 752,325 743,332 732,327 735,333 743,338 739,343 725,348 723,370 720,373 715,365 697,358',
  '739,343 753,342 752,352 767,360 777,360 800,353 807,350 823,348 843,355',
  '738,342 742,372 738,380 748,392 755,423',
  '660,415 687,413 748,401',
  '762,412 797,398 818,393 843,388',
  '802,353 802,373 817,392',
  '825,340 825,348',
  '843,355 842,370 843,388 850,398 860,408',
  '843,355 852,335 860,338 873,358 897,370 913,370 920,358',
  '852,335 863,313 873,298 877,288 888,272 878,262 882,242',
  '820,312 835,307 842,292 860,285 870,278 878,262',
  '835,308 840,322 850,335',
  '882,240 913,285 927,301 968,296 968,287 980,282 992,260 1052,259',
  '910,280 898,303 887,333 890,358 883,365',
  '920,357 913,343 912,327 920,313 970,307 983,315 973,340 973,360 950,360 920,356',
  '973,360 980,377 997,383 1017,378 1023,365',
  '920,357 917,367 900,372 883,365',
  '900,372 898,388 953,387',
  '920,357 940,370 953,378 953,397 962,412 980,410 997,417 998,383',
  '997,417 995,427 1001,452 985,463 963,467',
  '1000,452 1020,463 1033,488 1050,508 1058,512',
  '853,415 908,420 937,438 973,492 1005,533',
  '948,400 953,423 985,462',
  '906,397 933,403 947,400 952,423',
  '880,427 892,427 907,418 910,420',
  '892,427 887,450 900,455 923,442 937,442 942,457 940,472 928,478 920,470 913,472 910,469 895,469 892,485',
  '940,472 960,470 963,467',
  '892,485 905,500 908,507 945,517 962,495 968,492 973,493',
  '905,502 898,508 912,520 915,537 927,548 932,563 930,577 918,582 915,638',
  '892,485 867,505 856,508 845,500 843,490 852,473 857,443',
  '856,508 862,540 870,563 868,577 858,578 843,595 817,639 830,657',
  '832,468 823,500 815,568 778,671',
  '815,568 803,540 813,517 815,495 808,490 795,498 760,479',
  '787,455 807,480 808,490',
  '787,455 810,440 820,432 827,428 852,423 860,408',
  '810,440 822,460 832,468 843,453 828,430',
  '858,442 852,423 875,428 877,460 883,465 880,477 875,472 853,470',
  '857,445 875,450',
  '883,465 892,485',
  '853,415 880,417 892,427 875,429 852,423',
  '887,400 887,407 897,410 895,388',
  '907,397 910,420',
  '797,398 802,405 810,401 860,408 853,418',
  '654,432 690,448 700,443 730,435 737,442 742,438 748,439 756,428 752,400',
  '756,428 763,423 765,413 768,414',
  '627,467 662,476 673,470 687,471 692,480 691,497 693,515 700,518 707,518 727,508 747,490 760,479 767,470 770,463 768,452 763,452 771,442 763,433 763,423',
  '770,452 787,455',
  '772,425 793,422 797,430',
  '771,442 772,425',
  '707,518 712,537 711,545 700,560 697,573 690,602 673,613 680,632',
];

const MENUS: [React.ReactNode, number, boolean?][] = [
  [<>Pr<u>o</u>ject</>, 51], [<><u>E</u>dit</>, 33], [<><u>V</u>iew</>, 41], [<><u>L</u>ayer</>, 40], [<><u>S</u>ettings</>, 58], [<><u>P</u>lugins</>, 51],
  [<>Vect<u>o</u>r</>, 39, true], [<><u>R</u>aster</>, 54], [<><u>D</u>atabase</>, 54], [<><u>W</u>eb</>, 46], [<><u>M</u>esh</>, 35], [<>Pro<u>c</u>essing</>, 78], [<><u>H</u>elp</>, 33],
];

const App = () => (
  <Page>
    <Global />
    <TitleBar>
      <QLogo />
      <TitleText>*Untitled Project — QGIS</TitleText>
      <WinButtons>
        <WinButton><svg width="11" height="11"><path d="M0 5.500h11" stroke="#222" /></svg></WinButton>
        <WinButton><svg width="11" height="11"><path d="M2.500 2.500V.5h8v7h-2M.5 2.500h8v8h-8z" fill="none" stroke="#222" /></svg></WinButton>
        <WinButton><svg width="11" height="11"><path d="M.5.5l10 10M10.500.5l-10 10" stroke="#222" /></svg></WinButton>
      </WinButtons>
    </TitleBar>

    <MenuBar>
      {MENUS.map(([label, w, active], i) => (
        <MenuItem key={i} $w={w} $active={active}>{label}</MenuItem>
      ))}
    </MenuBar>

    <ToolBar>
      <Handle $w={12} />
      <ToolBtn><NewFile /></ToolBtn>
      <ToolBtn><OpenFolder /></ToolBtn>
      <ToolBtn><Save /></ToolBtn>
      <ToolBtn><SaveAs /></ToolBtn>
      <ToolBtn><Props /></ToolBtn>
      <ToolBtn><StyleIco /></ToolBtn>
      <Handle $w={17} $x={9} />
      <ToolBtn $active><HandIco /></ToolBtn>
      <ToolBtn><PanTo /></ToolBtn>
      <ToolGap $w={198} />
      <ToolBtn><ZoomLast /></ToolBtn>
      <ToolBtn><ZoomNext /></ToolBtn>
      <ToolBtn><NewMapView /></ToolBtn>
      <ToolBtn><Map3d /></ToolBtn>
      <ToolBtn><BookNew /></ToolBtn>
      <ToolBtn><BookShow /></ToolBtn>
      <ToolBtn><ClockIco /></ToolBtn>
      <ToolBtn><Refresh /></ToolBtn>
      <Handle $w={21} $x={9} />
      <ToolBtn $w={29}><SelectIco /></ToolBtn>
      <DropArea $w={16} />
      <ToolBtn $w={29}><SelectForm /></ToolBtn>
      <DropArea $w={16} />
      <ToolBtn $w={29}><Deselect /></ToolBtn>
      <DropArea $w={16} />
      <ToolBtn $w={26}><SelectLoc /></ToolBtn>
      <DropArea $w={19} />
      <Handle $w={10} />
      <ToolBtn><Identify /></ToolBtn>
      <ToolBtn><Abacus /></ToolBtn>
      <ToolBtn><Gear /></ToolBtn>
      <ToolBtn $active><Sigma /></ToolBtn>
      <ToolBtn><TableIco /></ToolBtn>
      <DropArea $w={12} />
      <ToolBtn><Ruler /></ToolBtn>
      <DropArea $w={12} />
      <ToolBtn><Balloon /></ToolBtn>
      <ToolBtn><DisabledRun /></ToolBtn>
      <DropArea $w={12} $dim />
    </ToolBar>

    <ToolBar>
      <Handle $w={13} />
      <ToolBtn><DataSource /></ToolBtn>
      <ToolBtn><GeoPkg /></ToolBtn>
      <ToolBtn><NewShape /></ToolBtn>
      <ToolBtn><Feather /></ToolBtn>
      <ToolBtn><Scratch /></ToolBtn>
      <ToolBtn><Virtual /></ToolBtn>
      <ToolBtn><MeshIco /></ToolBtn>
      <Handle $w={13} $x={8} />
      <ToolBtn><Feather dim /></ToolBtn>
      <ToolGap $w={191} />
      <ToolBtn><EditTable /></ToolBtn>
      <ToolBtn><Trash /></ToolBtn>
      <ToolBtn><Scissors /></ToolBtn>
      <ToolBtn><Copy /></ToolBtn>
      <ToolBtn><Paste /></ToolBtn>
      <ToolBtn><Undo /></ToolBtn>
      <ToolBtn><Redo /></ToolBtn>
      <Handle $w={16} $x={10} />
      <ToolBtn><LabelTag t="abc" fill="#f4d03f" line="#a88a1c" c="#333" /></ToolBtn>
      <ToolBtn><DiagramIco /></ToolBtn>
      <ToolSep $w={8} />
      <ToolBtn><LabelPin /></ToolBtn>
      <ToolBtn><LabelTag t="abc" fill="#fff" line="#d33" c="#d33" /></ToolBtn>
      <ToolSep $w={7} />
      <ToolBtn><GrayTag t="ab" badge={<g><path d="M15 10v7" stroke="#ccc" strokeWidth="2" /><circle cx="15" cy="19" r="4.500" fill="#c8c8c8" /></g>} /></ToolBtn>
      <ToolBtn><GrayTag t="abc" badge={<path d="M9 18c4-4 10-4 14 0-4 4-10 4-14 0z" fill="#eee" stroke="#c8c8c8" />} /></ToolBtn>
      <ToolBtn><GrayTag t="abc" badge={<g><rect x="12" y="13" width="11" height="10" fill="#cfcfcf" /><path d="M14 18h6M18 15l3 3-3 3" stroke="#fff" fill="none" /></g>} /></ToolBtn>
      <ToolBtn><GrayTag t="abc" badge={<g><rect x="12" y="13" width="11" height="10" fill="#cfcfcf" /><circle cx="17.500" cy="18" r="3" stroke="#fff" fill="none" /></g>} /></ToolBtn>
      <ToolBtn><GrayTag t="abc" badge={<g><rect x="12" y="13" width="11" height="10" fill="#cfcfcf" /><path d="M14 21l6-6" stroke="#fff" strokeWidth="2" /></g>} /></ToolBtn>
      <Handle $w={16} $x={8} />
      <ToolBtn><MetaSearch /></ToolBtn>
      <Handle $w={16} $x={8} />
      <ToolBtn><Python /></ToolBtn>
      <Handle $w={16} $x={8} />
      <ToolBtn><HelpBook /></ToolBtn>
      <Handle $w={16} $x={8} />
    </ToolBar>

    <Main>
      <LeftDock>
        <DockHeader $h={21}>
          <DockTitle>Browser (2)</DockTitle>
          <DockActions>
            <DockBtn><svg width="8" height="8"><path d="M2.500 2.500V.5h5v5h-2M.5 2.500h5v5h-5z" fill="none" stroke="#444" /></svg></DockBtn>
            <ToolGap $w={14} />
          </DockActions>
        </DockHeader>
        <SmallBar $h={29}>
          <ToolGap $w={3} />
          <SmallBtn><AddGroup /></SmallBtn>
          <SmallBtn><Refresh s={18} /></SmallBtn>
          <SmallBtn><Funnel s={18} /></SmallBtn>
          <SmallBtn><CollapseAll /></SmallBtn>
          <SmallBtn $active><InfoSmall /></SmallBtn>
        </SmallBar>
        <Tree>
          <TreeRows>
            <TreeRow><TreeArrow $show={false} /><TreeIcon><StarIco /></TreeIcon>Favorites</TreeRow>
            <TreeRow><TreeArrow $show /><TreeIcon><BookTree /></TreeIcon>Spatial Bookmarks</TreeRow>
            <TreeRow><TreeArrow $show /><TreeIcon><HomeFolder /></TreeIcon>Home</TreeRow>
            <TreeRow><TreeArrow $show /><TreeIcon><Folder /></TreeIcon>C:\</TreeRow>
            <TreeRow><TreeArrow $show /><TreeIcon><Folder /></TreeIcon>D:\</TreeRow>
            <TreeRow><TreeArrow $show /><TreeIcon><Folder open /></TreeIcon>E:\</TreeRow>
            <TreeRow><TreeArrow $show /><TreeIcon><Folder /></TreeIcon>F:\ (New Volume)</TreeRow>
          </TreeRows>
          <ScrollBar>
            <ScrollEnd />
            <ScrollTrack />
            <ScrollThumb />
            <ScrollEnd $down />
          </ScrollBar>
        </Tree>
        <Splitter $h={7} />
        <DockHeader $h={19} $up>
          <DockTitle>Layers</DockTitle>
          <DockActions>
            <DockBtn><svg width="8" height="8"><path d="M2.500 2.500V.5h5v5h-2M.5 2.500h5v5h-5z" fill="none" stroke="#444" /></svg></DockBtn>
            <DockBtn><svg width="8" height="8"><path d="M1 1l6 6M7 1L1 7" stroke="#333" strokeWidth="1.400" /></svg></DockBtn>
          </DockActions>
        </DockHeader>
        <SmallBar $h={31}>
          <ToolGap $w={4} />
          <SmallBtn><Brush /></SmallBtn>
          <SmallBtn><AddLayers /></SmallBtn>
          <SmallBtn><Eye /></SmallBtn>
          <SmallBtn><Funnel /></SmallBtn>
          <SmallBtn $w={25}><EpsFilter /></SmallBtn>
          <DropArea $w={12} />
          <SmallBtn><CollapseAll down /></SmallBtn>
          <SmallBtn><CollapseAll /></SmallBtn>
          <SmallBtn><RemoveLayer /></SmallBtn>
        </SmallBar>
        <LayerList>
          <LayerRow>
            <LayerCheck><svg width="11" height="11"><path d="M1.500 5.500l3 3.500 5-8" fill="none" stroke="#111" strokeWidth="1.800" /></svg></LayerCheck>
            <LayerSwatch />
            <LayerName>Batas Kelurahan Kota Banjarmasin</LayerName>
          </LayerRow>
        </LayerList>
        <Splitter $h={6} />
        <DockHeader $h={20} $up>
          <DockTitle>Statistics</DockTitle>
          <DockActions>
            <DockBtn><svg width="8" height="8"><path d="M2.500 2.500V.5h5v5h-2M.5 2.500h5v5h-5z" fill="none" stroke="#444" /></svg></DockBtn>
            <DockBtn><svg width="8" height="8"><path d="M1 1l6 6M7 1L1 7" stroke="#333" strokeWidth="1.400" /></svg></DockBtn>
          </DockActions>
        </DockHeader>
        <Combo>
          <Combi />
          <ComboText>Batas Kelurahan Kota Banjarmasin</ComboText>
          <ComboArrow />
        </Combo>
        <ExprRow>
          <ExprInput><ExprDrop /></ExprInput>
          <ExprBtn>ε</ExprBtn>
        </ExprRow>
        <StatTable>
          <StatHeader>
            <StatCol>Statistic</StatCol>
            <StatCol>Value</StatCol>
          </StatHeader>
        </StatTable>
        <StatFoot>
          <FootCheck />
          <FootLabel>Selected features only</FootLabel>
          <FootTools>
            <SmallBtn><GrayCopy /></SmallBtn>
            <SmallBtn><Refresh s={18} /></SmallBtn>
            <MoreBtn>...</MoreBtn>
          </FootTools>
        </StatFoot>
      </LeftDock>
      <Canvas>
        <MapSvg viewBox="301 121 1065 579">
          <polygon points={OUTLINE} fill="#e15989" stroke="#4a3540" strokeWidth="0.9" strokeLinejoin="round" />
          {LINES.map((l, i) => (
            <polyline key={i} points={l} fill="none" stroke="#33262d" strokeWidth="1" strokeLinejoin="round" />
          ))}
        </MapSvg>
        <Watermark>
          <WatermarkBig>Activate Windows</WatermarkBig>
          <WatermarkSmall>Go to Settings to activate Windows.</WatermarkSmall>
        </Watermark>
      </Canvas>
    </Main>

    <StatusBar>
      <Locator>
        <Search size={15} color="#777" strokeWidth={1.600} />
        Type to locate (Ctrl+K)
      </Locator>
      <StatusLabel $l={349}>Coordinate</StatusLabel>
      <StatusField $w={114} $l={2}>-3,2841°  114,4834°</StatusField>
      <StatusIcon $l={4}><NoCrs /></StatusIcon>
      <StatusLabel $l={11}>Scale</StatusLabel>
      <StatusField $w={79} $l={4}>1:84078<FieldDrop /></StatusField>
      <StatusIcon $l={12}><Lock size={15} color="#666" fill="#999" /></StatusIcon>
      <StatusLabel $l={6}>Magnifier</StatusLabel>
      <StatusField $w={83} $l={1}>100%<FieldSpin /></StatusField>
      <StatusLabel $l={8}>Rotation</StatusLabel>
      <StatusField $w={85} $l={7}>0,0 °<FieldSpin /></StatusField>
      <RenderCheck><svg width="10" height="10"><path d="M1 5l3 4 5-8" fill="none" stroke="#111" strokeWidth="1.500" /></svg></RenderCheck>
      <StatusLabel $l={0}>Render</StatusLabel>
      <StatusIcon $l={15}><EpsgGlobe /></StatusIcon>
      <StatusLabel $l={1}>EPSG:4326</StatusLabel>
      <StatusIcon $l={21}><MessageCircle size={18} color="#555" fill="#666" /></StatusIcon>
    </StatusBar>

    <TaskBar>
      <StartBtn><WinLogo /></StartBtn>
      <SearchBox>
        <Search size={19} color="#222" strokeWidth={1.500} style={{ transform: 'scaleX(-1)' }} />
        <SearchText>Type here to search</SearchText>
        <SearchArt><Flowers /></SearchArt>
      </SearchBox>
      <TaskItem><TaskView /></TaskItem>
      <TaskItem><Copilot /></TaskItem>
      <TaskItem $open><Explorer /></TaskItem>
      <TaskItem><Excel /></TaskItem>
      <TaskItem><Ppt /></TaskItem>
      <TaskItem $open><Word /></TaskItem>
      <TaskItem $open><Chrome /></TaskItem>
      <TaskItem><VsCode /></TaskItem>
      <TaskItem><WhatsTile><FaWhatsapp size={19} color="#fff" /></WhatsTile></TaskItem>
      <TaskItem $open $current><QLogo s={24} /></TaskItem>
      <TaskItem $open><Snip /></TaskItem>
      <Tray>
        <Weather><WeatherIco />25°C  Berawan</Weather>
        <TrayIcon><ChevronUp size={18} color="#111" strokeWidth={1.500} /></TrayIcon>
        <TrayIcon><Meet /></TrayIcon>
        <TrayIcon><Battery /></TrayIcon>
        <TrayIcon><Volume /></TrayIcon>
        <Clock>23:24<br />01/05/2025</Clock>
        <Notify><NotifyIco /></Notify>
      </Tray>
    </TaskBar>

    <Popup $l={281} $t={43} $w={201}>
      <PopupItem $indent={27}><span><u>G</u>eoprocessing Tools</span><PopupArrow /></PopupItem>
      <PopupItem $indent={27}><span>G<u>e</u>ometry Tools</span><PopupArrow /></PopupItem>
      <PopupItem $indent={27}><span><u>A</u>nalysis Tools</span><PopupArrow /></PopupItem>
      <PopupItem $indent={27}><span><u>R</u>esearch Tools</span><PopupArrow /></PopupItem>
      <PopupItem $indent={27} $active><span><u>D</u>ata Management Tools</span><PopupArrow $active /></PopupItem>
    </Popup>
    <Popup $l={482} $t={135} $w={246}>
      <PopupItem $indent={5}><PopupIcon><Cog16 /></PopupIcon>Create Spatial Index...</PopupItem>
      <PopupItem $indent={5}><PopupIcon><Cog16 /></PopupIcon>Join Attributes by Location...</PopupItem>
      <PopupItem $indent={5}><PopupIcon><MergeIco /></PopupIcon>Merge Vector Layers...</PopupItem>
      <PopupItem $indent={5}><PopupIcon><Cog16 /></PopupIcon>Reproject Layer...</PopupItem>
      <PopupItem $indent={5} $active><PopupIcon><SplitIco /></PopupIcon>Split Vector Layer...</PopupItem>
    </Popup>
  </Page>
);

export default App;
